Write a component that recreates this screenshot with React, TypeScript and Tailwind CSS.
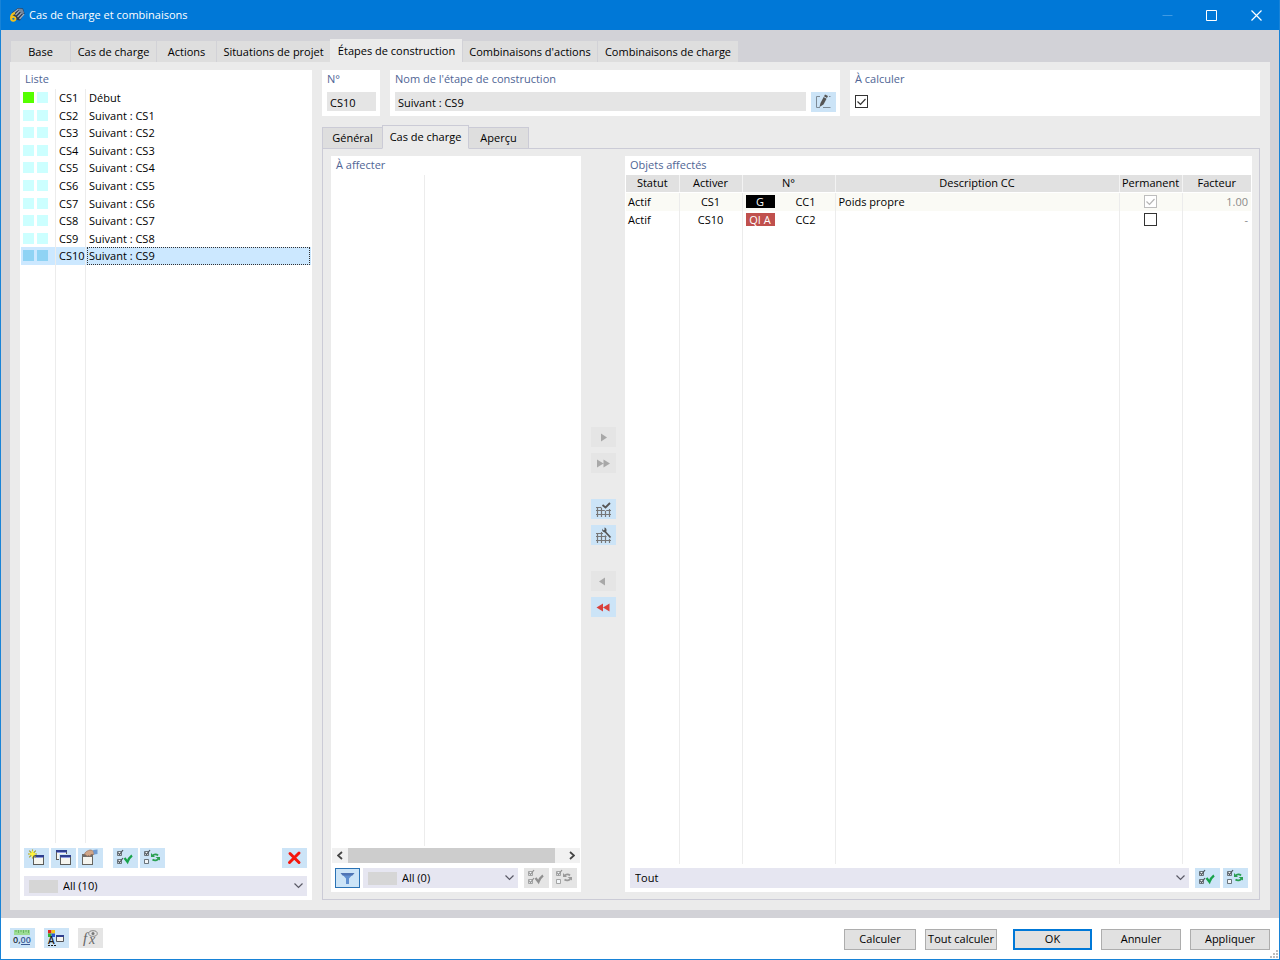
import { useState, type ReactNode } from 'react';
import { clsx } from 'clsx';

const MAIN_TABS = [
  { label: 'Base', width: 'w-[60px]' },
  { label: 'Cas de charge', width: 'w-[86px]' },
  { label: 'Actions', width: 'w-[60px]' },
  { label: 'Situations de projet', width: 'w-[114px]' },
  { label: 'Étapes de construction', width: 'w-[132px]' },
  { label: "Combinaisons d'actions", width: 'w-[135px]' },
  { label: 'Combinaisons de charge', width: 'w-[141px]' },
];

const SUB_TABS = [
  { label: 'Général', width: 'w-[60px]' },
  { label: 'Cas de charge', width: 'w-[87px]' },
  { label: 'Aperçu', width: 'w-[60px]' },
];

const STAGES = [
  { id: 'CS1', name: 'Début' },
  { id: 'CS2', name: 'Suivant : CS1' },
  { id: 'CS3', name: 'Suivant : CS2' },
  { id: 'CS4', name: 'Suivant : CS3' },
  { id: 'CS5', name: 'Suivant : CS4' },
  { id: 'CS6', name: 'Suivant : CS5' },
  { id: 'CS7', name: 'Suivant : CS6' },
  { id: 'CS8', name: 'Suivant : CS7' },
  { id: 'CS9', name: 'Suivant : CS8' },
  { id: 'CS10', name: 'Suivant : CS9' },
];

const ASSIGNED = [
  { status: 'Actif', stage: 'CS1', tag: 'G', tagClass: 'bg-black', id: 'CC1', desc: 'Poids propre', permanent: true, factor: '1.00' },
  { status: 'Actif', stage: 'CS10', tag: 'QI A', tagClass: 'bg-[#c0504d]', id: 'CC2', desc: '', permanent: false, factor: '-' },
];

/* ---------- icons ---------- */

const Svg = ({ children, className = 'w-[25px] h-5', box = '0 0 25 20' }: { children: ReactNode; className?: string; box?: string }) => (
  <svg viewBox={box} className={clsx('block shrink-0', className)} fill="none" aria-hidden="true">
    {children}
  </svg>
);

const AppIcon = () => (
  <Svg className="w-4 h-4" box="0 0 16 16">
    <path d="M3 5.500 9 1l5 .5 1.500 5L11 13.500 6 12.500Z" fill="#2c3b52" />
    <path d="M4.500 6 9.500 2M6.500 8 12 2.500M8.500 10 14 4.500M10.500 12 15 7" stroke="#9fb0c2" strokeWidth="1.200" />
    <path d="m9.500 1.500 4 .5 1.500 4-2 1-3.500-4Z" fill="#74889e" />
    <path d="M6 6.500C3.500 5.800 2 8.500 2 11c0 3.800 4.500 3.500 4.500.8C6.500 9.500 3.500 9.300 2.500 11" stroke="#f5c018" strokeWidth="2" />
  </Svg>
);

const WindowShape = ({ x, y }: { x: number; y: number }) => (
  <g>
    <rect x={x + 0.5} y={y + 0.5} width="10" height="9" fill="#f6f5ef" stroke="#5b5b58" />
    <path d={`M${x} ${y + 1}h11`} stroke="#2f3f8f" strokeWidth="2" />
    <path d={`M${x + 1} ${y + 2.5}h9`} stroke="#8f9be0" />
  </g>
);

const NewIcon = () => (
  <Svg>
    <WindowShape x={9} y={7} />
    <path d="M8.500 1.500v9M4 6h9M5.200 2.700l6.600 6.600M11.800 2.700 5.200 9.300" stroke="#a39b25" strokeWidth="1.100" />
    <path d="m8.500 2 1.200 2.800L12.500 6 9.700 7.200 8.500 10 7.300 7.200 4.500 6l2.800-1.200Z" fill="#fff23a" />
  </Svg>
);

const CopyIcon = () => (
  <Svg>
    <WindowShape x={5} y={2} />
    <rect x="8" y="6" width="13" height="12" fill="#cce4f7" />
    <WindowShape x={9} y={7} />
  </Svg>
);

const OpenIcon = () => (
  <Svg>
    <rect x="4.500" y="7.500" width="10" height="9" fill="#f6f5ef" stroke="#66645f" />
    <path d="M4 6h11v3H4z" fill="#6e6d6b" />
    <path d="M6.500 6.500c0-2 3-4.500 6.500-4.500l3 1.500v3h-3l-1 2-1.500-1-1.500 1-1-1.500Z" fill="#d0a587" stroke="#8b6753" strokeWidth=".6" />
    <path d="m15 2 4.500-.5v4.500l-3.500.5Z" fill="#6f9bd2" />
  </Svg>
);

const SmallBoxes = ({ second = true, color }: { second?: boolean; color: string }) => (
  <g stroke={color}>
    <path d="M4.500 3.500h4v4h-4z" fill="#f3f6f8" strokeWidth=".8" />
    <path d="m5 4.500 1.500 2L10 2" strokeWidth="1.200" />
    <path d="M4.500 11.500h4v4h-4z" fill="#f3f6f8" strokeWidth=".8" />
    {second && <path d="m5 12.500 1.500 2L10 10" strokeWidth="1.200" />}
  </g>
);

const CheckAllIcon = ({ muted = false }: { muted?: boolean }) => (
  <Svg>
    <SmallBoxes color={muted ? '#929292' : '#4d555c'} />
    <path d="m11.500 10 3 4c1-3 2.500-5 4.500-6.500" stroke={muted ? '#8f8f8f' : '#17a34a'} strokeWidth="2.200" />
  </Svg>
);

const ToggleIcon = ({ muted = false }: { muted?: boolean }) => {
  const color = muted ? '#9a9a9a' : '#2aa052';
  return (
    <Svg>
      <SmallBoxes second={false} color={muted ? '#929292' : '#4d555c'} />
      <path d="M12.500 8c1.500-2 4-2 5.500-.5M18.500 10.500c-1 2-4 2.500-6 1" stroke={color} strokeWidth="1.800" />
      <path d="M11 5v4h4ZM20 12.500V9h-4.500Z" fill={color} />
    </Svg>
  );
};

const DeleteIcon = () => (
  <Svg>
    <path d="m8 5.500 9 9M17 5l-9.500 9.500" stroke="#f5160c" strokeWidth="3" strokeLinecap="round" />
  </Svg>
);

const EditIcon = () => (
  <Svg>
    <path d="M9 4.500H5.500v11H9M12 15.500h7.500M18 4.500h1.500" stroke="#7c8a96" />
    <path d="m8.500 15 1-4L14 2.500l3 1.500-4.500 8.500Z" fill="#555" />
    <path d="m12.500 4.500 3.500 2" stroke="#cce4f7" />
  </Svg>
);

const FilterIcon = () => (
  <Svg className="w-[23px] h-[18px]" box="0 0 23 18">
    <path d="M5 4h13l-5 5.500V15h-3V9.500Z" fill="#5f8fd0" />
    <path d="M4.500 4h14l-2 2.500h-10Z" fill="#4f74b4" />
  </Svg>
);

const GridIcon = () => (
  <path d="M6.500 8v10M10.500 7v11M14.500 10v8M18.500 10v8M5 8.500h7M5 11.500h15M5 15.500h15" stroke="#777" strokeWidth="1.200" />
);

const GridCheckIcon = () => (
  <Svg>
    <GridIcon />
    <path d="m11 6 3.500 3L20 4" stroke="#cce4f7" strokeWidth="4.500" />
    <path d="m11.500 6 3 2.500L19 4" stroke="#555" strokeWidth="1.800" />
  </Svg>
);

const GridWrenchIcon = () => (
  <Svg>
    <GridIcon />
    <path d="m12 4 8 8.500" stroke="#cce4f7" strokeWidth="5" />
    <path d="m13.500 6 6 6.500" stroke="#555" strokeWidth="1.800" />
    <path d="M11 3.500c-.5 3 2 4.500 4 3.500 1-1.500.8-4-1.500-4.500v2.500l-1.500.3Z" fill="#555" />
  </Svg>
);

const ArrowsIcon = ({ left = false, double = false, color = '#a8a8a8' }: { left?: boolean; double?: boolean; color?: string }) => (
  <Svg>
    <g fill={color}>
      {!double && <path d={left ? 'M14 6.500v8L8 10.500z' : 'M10 6.500v8l6-4z'} />}
      {double && left && <path d="M12 6.500v8L5.500 10.500zM18.500 6.500v8L12 10.500z" />}
      {double && !left && <path d="M6 6.500v8l6.500-4zM12.500 6.500v8l6.500-4z" />}
    </g>
  </Svg>
);

const UnitsIcon = () => (
  <Svg>
    <path d="M4 2h16v5H4z" fill="#9bdc94" />
    <path d="M6 2v2M8.500 2v3M11 2v2M13.500 2v3M16 2v2M18.500 2v3" stroke="#5cab58" strokeWidth=".8" />
    <text x="3" y="15" fontSize="9" fontWeight="600" fill="#26323f" fontFamily="Open Sans, sans-serif">
      0,<tspan fill="#3a5a96">00</tspan>
    </text>
    <path d="M11 16.500h9" stroke="#3a5a96" />
  </Svg>
);

const DisplayIcon = () => (
  <Svg>
    <path d="M4 2h3.500v3.500H4z" fill="#e02620" />
    <path d="M7.500 2H11v3.500H7.500z" fill="#f2c618" />
    <path d="M4 5.500h3.500V9H4z" fill="#2cb534" />
    <path d="M7.500 5.500H11V9H7.500z" fill="#2a55d0" />
    <text x="4" y="16" fontSize="10" fontWeight="600" fill="#1b1b1b" fontFamily="Open Sans, sans-serif">
      A
    </text>
    <path d="M4 17.500h8" stroke="#1b1b1b" strokeDasharray="2 1" />
    <path d="M12.500 7.500h7v6h-7z" fill="#f6f5ef" stroke="#55575c" />
    <path d="M12 8h8" stroke="#2f3f8f" strokeWidth="2" />
  </Svg>
);

const FormulaIcon = () => (
  <Svg>
    <text x="5" y="15" fontSize="15" fontStyle="italic" fill="#666" fontFamily="Liberation Serif, serif">
      f
    </text>
    <text x="11" y="16" fontSize="14" fontStyle="italic" fill="#666" fontFamily="Liberation Serif, serif">
      x
    </text>
    <ellipse cx="15" cy="5.500" rx="4.200" ry="2.800" fill="#e5e5e5" stroke="#888" />
    <circle cx="15" cy="5.500" r="1.500" fill="#777" />
  </Svg>
);

const Chevron = () => (
  <Svg className="w-[9px] h-[6px] pointer-events-none" box="0 0 9 6">
    <path d="m.5.5 4 4 4-4" stroke="#5a5a66" strokeWidth="1.200" />
  </Svg>
);

/* ---------- controls ---------- */

type IconButtonProps = { label: string; children: ReactNode; disabled?: boolean; pressed?: boolean; className?: string };

const IconButton = ({ label, children, disabled, pressed, className }: IconButtonProps) => (
  <button
    type="button"
    aria-label={label}
    title={label}
    disabled={disabled}
    className={clsx(
      'flex items-center justify-center w-[25px] h-5 shrink-0',
      disabled ? 'bg-[#e5e5e5]' : 'bg-[#cce4f7]',
      pressed && 'border border-[#2a72b5]',
      className,
    )}
  >
    {children}
  </button>
);

const Select = ({ label, value, swatch, className }: { label: string; value: string; swatch?: boolean; className?: string }) => (
  <div className={clsx('flex items-center h-5 pl-[5px] pr-1 bg-[#e6e6f1]', className)}>
    {swatch && <span className="w-[29px] h-[13px] mr-[5px] bg-[#d6d6d6] shrink-0" />}
    <select aria-label={label} className="flex-1 min-w-0 h-5 pt-px appearance-none bg-transparent outline-none">
      <option>{value}</option>
    </select>
    <Chevron />
  </div>
);

type CheckboxProps = { id?: string; label?: string; checked: boolean; disabled?: boolean; onChange?: () => void };

const Checkbox = ({ id, label, checked, disabled, onChange }: CheckboxProps) => (
  <span className="inline-grid">
    <input
      id={id}
      aria-label={label}
      type="checkbox"
      checked={checked}
      disabled={disabled}
      onChange={onChange}
      className="[grid-area:1/1] appearance-none w-[13px] h-[13px] border border-[#333] bg-white disabled:border-[#bdbdbd]"
    />
    {checked && (
      <Svg className="[grid-area:1/1] w-[13px] h-[13px] pointer-events-none" box="0 0 13 13">
        <path d="m2.500 6.500 3 3L10.500 4" stroke={disabled ? '#b5b5b5' : '#333'} strokeWidth="1.200" />
      </Svg>
    )}
  </span>
);

const Heading = ({ children }: { children: ReactNode }) => (
  <h2 className="h-[18px] pl-[5px] leading-[18px] font-medium text-[#4f6595]">{children}</h2>
);

const DialogButton = ({ children, className }: { children: ReactNode; className: string }) => (
  <button type="button" className={clsx('h-[21px] bg-[#e1e1e1] whitespace-nowrap', className)}>
    {children}
  </button>
);

/* ---------- panels ---------- */

const StageList = ({ selected, onSelect }: { selected: string; onSelect: (id: string) => void }) => (
  <section className="flex flex-col w-[292px] shrink-0 bg-white pb-1">
    <Heading>Liste</Heading>
    <ul className="grid grid-rows-10 h-44 mt-px mx-px">
      {STAGES.map(({ id, name }, index) => {
        const active = id === selected;
        return (
          <li key={id} className={clsx('flex min-h-0', active && 'bg-[#cce8ff]')}>
            <button type="button" onClick={() => onSelect(id)} className="flex flex-1 items-stretch text-left leading-[18px]">
              <span className="flex gap-[3px] w-[35px] pl-[2px] pt-[3px] border-r border-[#ececec]">
                <span className={clsx('w-[11px] h-[11px]', active ? 'bg-[#8fd3f4]' : index === 0 ? 'bg-[#55ff00]' : 'bg-[#ccffff]')} />
                <span className={clsx('w-[11px] h-[11px]', active ? 'bg-[#8fd3f4]' : 'bg-[#ccffff]')} />
              </span>
              <span className="w-[30px] pl-[3px] border-r border-[#ececec]">{id}</span>
              <span className={clsx('flex-1 mr-px', active ? 'ml-px pl-[2px] outline-1 -outline-offset-1 outline-dotted outline-[#333]' : 'pl-[3px]')}>
                {name}
              </span>
            </button>
          </li>
        );
      })}
    </ul>
    <div className="flex flex-1 mx-px">
      <div className="w-[35px] border-r border-[#ececec]" />
      <div className="w-[30px] border-r border-[#ececec]" />
    </div>
    <div className="flex gap-[2px] mt-[5px] pl-1 pr-[5px]">
      <IconButton label="Nouveau"><NewIcon /></IconButton>
      <IconButton label="Copier"><CopyIcon /></IconButton>
      <IconButton label="Importer"><OpenIcon /></IconButton>
      <IconButton label="Tout sélectionner" className="ml-2"><CheckAllIcon /></IconButton>
      <IconButton label="Inverser la sélection"><ToggleIcon /></IconButton>
      <IconButton label="Supprimer" className="ml-auto"><DeleteIcon /></IconButton>
    </div>
    <Select label="Filtre de la liste" value="All (10)" swatch className="mt-2 ml-1 mr-[5px]" />
  </section>
);

const Scrollbar = () => (
  <div className="flex h-[15px] mx-px bg-[#f1f1f1]">
    <button type="button" aria-label="Défiler à gauche" className="flex items-center justify-center w-4">
      <Svg className="w-[6px] h-[9px]" box="0 0 6 9"><path d="m5 1-4 3.500L5 8" stroke="#444" strokeWidth="1.800" /></Svg>
    </button>
    <div className="flex-1">
      <div className="w-24/25 h-full bg-[#cdcdcd]" />
    </div>
    <button type="button" aria-label="Défiler à droite" className="flex items-center justify-center w-4">
      <Svg className="w-[6px] h-[9px]" box="0 0 6 9"><path d="m1 1 4 3.500L1 8" stroke="#444" strokeWidth="1.800" /></Svg>
    </button>
  </div>
);

const ToAssignPanel = () => (
  <section className="flex flex-col w-[250px] shrink-0 bg-white pb-1">
    <Heading>À affecter</Heading>
    <div className="flex-1 w-[94px] mt-px mb-[2px] border-r border-[#ececec]" />
    <Scrollbar />
    <div className="flex gap-[3px] mt-[5px] px-1">
      <IconButton label="Filtrer" pressed><FilterIcon /></IconButton>
      <Select label="Filtre à affecter" value="All (0)" swatch className="flex-1" />
      <IconButton label="Tout sélectionner" disabled className="ml-[3px]"><CheckAllIcon muted /></IconButton>
      <IconButton label="Inverser la sélection" disabled><ToggleIcon muted /></IconButton>
    </div>
  </section>
);

const TransferButtons = () => (
  <div className="flex flex-col items-center justify-center gap-[26px] w-[44px] shrink-0 pb-1">
    <div className="flex flex-col gap-[6px]">
      <IconButton label="Ajouter" disabled><ArrowsIcon /></IconButton>
      <IconButton label="Tout ajouter" disabled><ArrowsIcon double /></IconButton>
    </div>
    <div className="flex flex-col gap-[6px]">
      <IconButton label="Affecter"><GridCheckIcon /></IconButton>
      <IconButton label="Modifier"><GridWrenchIcon /></IconButton>
    </div>
    <div className="flex flex-col gap-[6px]">
      <IconButton label="Retirer" disabled><ArrowsIcon left /></IconButton>
      <IconButton label="Tout retirer"><ArrowsIcon left double color="#d9413c" /></IconButton>
    </div>
  </div>
);

const AssignedPanel = () => {
  const [permanent, setPermanent] = useState(false);

  return (
    <section className="flex flex-col flex-1 min-w-0 bg-white pb-1">
      <Heading>Objets affectés</Heading>
      <div className="grid flex-1 mx-px mt-px mb-1">
        <table className="w-full h-full table-fixed border-collapse">
          <colgroup>
            <col className="w-[53px]" />
            <col className="w-[63px]" />
            <col className="w-[93px]" />
            <col />
            <col className="w-[63px]" />
            <col className="w-[69px]" />
          </colgroup>
          <thead>
            <tr className="h-[17px] bg-[#e1e1e1]">
              {['Statut', 'Activer', 'N°', 'Description CC', 'Permanent', 'Facteur'].map((title) => (
                <th key={title} className="p-0 font-medium leading-4 border-r border-b border-r-[#f3f3f3] border-b-white last:border-r-0">
                  {title}
                </th>
              ))}
            </tr>
          </thead>
          <tbody>
            {ASSIGNED.map((row, index) => (
              <tr key={row.id} className={clsx('h-[18px] leading-[18px]', index === 0 && 'bg-[#fafaf5]')}>
                <td className="p-0 pl-[2px] border-r border-[#ececec]">{row.status}</td>
                <td className="p-0 text-center border-r border-[#ececec]">{row.stage}</td>
                <td className="p-0 border-r border-[#ececec]">
                  <div className="flex items-center pl-[3px]">
                    <span className={clsx('w-[29px] h-[13px] leading-[13px] text-center text-white', row.tagClass)}>{row.tag}</span>
                    <span className="flex-1 pl-[2px] text-center">{row.id}</span>
                  </div>
                </td>
                <td className="p-0 pl-[3px] border-r border-[#ececec]">{row.desc}</td>
                <td className="p-0 border-r border-[#ececec]">
                  <div className="flex justify-center">
                    <Checkbox
                      label={`Permanent ${row.id}`}
                      checked={row.permanent || permanent}
                      disabled={row.permanent}
                      onChange={() => setPermanent(!permanent)}
                    />
                  </div>
                </td>
                <td className="p-0 pr-[3px] text-right text-[#8a8a8a]">{row.factor}</td>
              </tr>
            ))}
            <tr>
              <td className="border-r border-[#ececec]" />
              <td className="border-r border-[#ececec]" />
              <td className="border-r border-[#ececec]" />
              <td className="border-r border-[#ececec]" />
              <td className="border-r border-[#ececec]" />
              <td />
            </tr>
          </tbody>
        </table>
      </div>
      <div className="flex gap-[3px] pl-[5px] pr-1">
        <Select label="Filtre des objets affectés" value="Tout" className="flex-1 mr-[3px]" />
        <IconButton label="Tout sélectionner"><CheckAllIcon /></IconButton>
        <IconButton label="Inverser la sélection"><ToggleIcon /></IconButton>
      </div>
    </section>
  );
};

const StageHeader = ({ id, name }: { id: string; name: string }) => {
  const [compute, setCompute] = useState(true);

  return (
    <div className="flex gap-[10px]">
      <div className="w-[58px] h-[46px] shrink-0 bg-white">
        <Heading><label htmlFor="stage-id">N°</label></Heading>
        <input id="stage-id" readOnly value={id} className="block w-[49px] h-[19px] mt-[4px] ml-[5px] pl-[3px] pt-px bg-[#e5e5e5] outline-none" />
      </div>
      <div className="flex-[450] h-[46px] bg-white">
        <Heading><label htmlFor="stage-name">Nom de l'étape de construction</label></Heading>
        <div className="flex gap-[5px] mt-[4px] pl-[5px] pr-1">
          <input id="stage-name" readOnly value={name} className="flex-1 min-w-0 h-[19px] pl-[3px] pt-px bg-[#e5e5e5] outline-none" />
          <IconButton label="Modifier le nom"><EditIcon /></IconButton>
        </div>
      </div>
      <div className="flex-[410] h-[46px] bg-white">
        <Heading><label htmlFor="compute">À calculer</label></Heading>
        <div className="flex mt-[7px] ml-[5px]">
          <Checkbox id="compute" checked={compute} onChange={() => setCompute(!compute)} />
        </div>
      </div>
    </div>
  );
};

export default function App() {
  const [mainTab, setMainTab] = useState(4);
  const [subTab, setSubTab] = useState(1);
  const [selected, setSelected] = useState('CS10');
  const stage = STAGES.find(({ id }) => id === selected) ?? STAGES[0];

  return (
    <div className="flex flex-col min-h-screen border border-t-0 border-[#1883d7] bg-white font-['Open_Sans','Noto_Sans',sans-serif] text-[11px] font-medium text-black">
      <header className="flex items-center h-[30px] pl-2 bg-[#0078d7] text-white">
        <AppIcon />
        <h1 className="ml-[4px] text-[11px] font-medium">Cas de charge et combinaisons</h1>
        <div className="flex ml-auto">
          <button type="button" aria-label="Réduire" className="flex items-center justify-center w-11 h-[30px]">
            <Svg className="w-[11px] h-[11px]" box="0 0 11 11"><path d="M.5 5.500h10" stroke="#3f9ae3" /></Svg>
          </button>
          <button type="button" aria-label="Agrandir" className="flex items-center justify-center w-[45px] h-[30px]">
            <Svg className="w-[11px] h-[11px]" box="0 0 11 11"><path d="M.5.5h10v10H.5z" stroke="#fff" /></Svg>
          </button>
          <button type="button" aria-label="Fermer" className="flex items-center justify-center w-[45px] h-[30px]">
            <Svg className="w-[11px] h-[11px]" box="0 0 11 11"><path d="m.5.5 10 10M10.500.5l-10 10" stroke="#fff" strokeWidth="1.200" /></Svg>
          </button>
        </div>
      </header>

      <main className="flex flex-col flex-1 pt-[9px] pb-2 px-[9px] bg-[#d2d2d7]">
        <div role="tablist" className="flex items-end">
          {MAIN_TABS.map(({ label, width }, index) => (
            <button
              key={label}
              type="button"
              role="tab"
              aria-selected={index === mainTab}
              onClick={() => setMainTab(index)}
              className={clsx(
                'pt-[2px] whitespace-nowrap border-l',
                width,
                index === mainTab ? 'h-[23px] bg-[#ebebeb] border-[#ebebeb]' : 'h-[21px] bg-[#dedede] border-[#d2d2d7]',
              )}
            >
              {label}
            </button>
          ))}
        </div>

        <div className="flex flex-1 gap-[10px] pt-2 pb-[10px] px-[10px] bg-[#ebebeb]">
          <StageList selected={selected} onSelect={setSelected} />

          <div className="flex flex-col flex-1 min-w-0">
            <StageHeader id={stage.id} name={stage.name} />

            <div role="tablist" className="flex items-end mt-[9px]">
              {SUB_TABS.map(({ label, width }, index) => (
                <button
                  key={label}
                  type="button"
                  role="tab"
                  aria-selected={index === subTab}
                  onClick={() => setSubTab(index)}
                  className={clsx(
                    'pt-px whitespace-nowrap border border-[#cbcbd6]',
                    width,
                    index === subTab ? 'h-[24px] -mb-px bg-[#ebebeb] border-b-[#ebebeb] z-10' : 'h-[21px] bg-[#dedede] border-b-0',
                    index < subTab && 'border-r-0',
                    index > subTab && 'border-l-0',
                  )}
                >
                  {label}
                </button>
              ))}
            </div>
            <div className="flex flex-1 py-[7px] pl-2 pr-[7px] border border-[#cbcbd6]">
              <ToAssignPanel />
              <TransferButtons />
              <AssignedPanel />
            </div>
          </div>
        </div>
      </main>

      <footer className="flex items-start h-[41px] pt-[10px] px-[9px]">
        <div className="flex gap-[9px]">
          <IconButton label="Unités"><UnitsIcon /></IconButton>
          <IconButton label="Affichage"><DisplayIcon /></IconButton>
          <IconButton label="Formule" disabled><FormulaIcon /></IconButton>
        </div>
        <div className="flex gap-[9px] mt-px ml-auto">
          <DialogButton className="w-[72px] border border-[#adadad]">Calculer</DialogButton>
          <DialogButton className="w-[72px] border border-[#adadad]">Tout calculer</DialogButton>
          <DialogButton className="w-[79px] ml-[7px] border-2 border-[#0078d7]">OK</DialogButton>
          <DialogButton className="w-[80px] border border-[#adadad]">Annuler</DialogButton>
          <DialogButton className="w-[80px] border border-[#adadad]">Appliquer</DialogButton>
        </div>
        <div className="self-end w-0">
          <Svg className="w-[9px] h-[9px]" box="0 0 9 9">
            <path d="M6 0h2v2H6zM3 3h2v2H3zM6 3h2v2H6zM0 6h2v2H0zM3 6h2v2H3zM6 6h2v2H6z" fill="#bdbdbd" />
          </Svg>
        </div>
      </footer>
    </div>
  );
}
